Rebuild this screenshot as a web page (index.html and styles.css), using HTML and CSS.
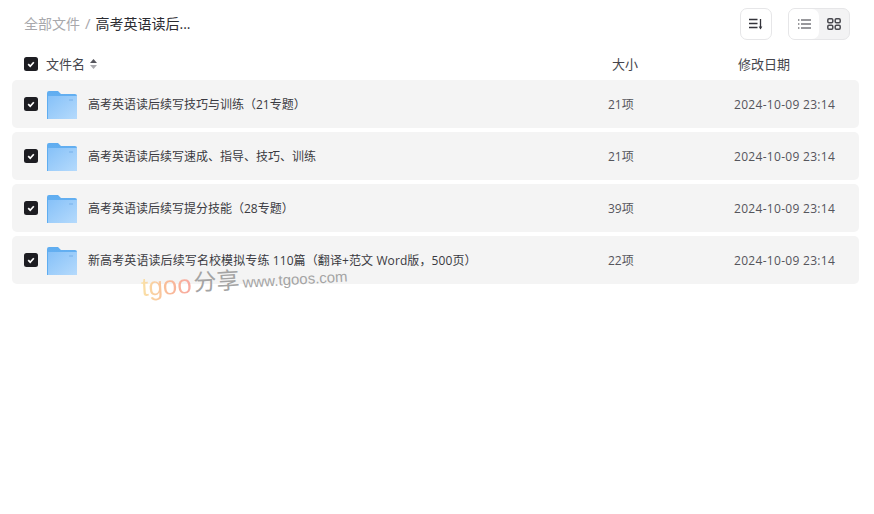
FILE: index.html

```html
<!DOCTYPE html>
<html lang="zh-CN">
<head>
    <meta charset="UTF-8">
    <title>全部文件</title>
    <link rel="stylesheet" href="styles.css">
</head>
<body>
    <svg class="defs" width="0" height="0">
        <defs>
            <linearGradient id="folder-back" x1="0" y1="0" x2="0" y2="1">
                <stop offset="0" stop-color="#5fadf0"/>
                <stop offset="1" stop-color="#78baf5"/>
            </linearGradient>
            <linearGradient id="folder-front" x1="0" y1="0" x2="1" y2="1">
                <stop offset="0" stop-color="#86c1f8"/>
                <stop offset="1" stop-color="#b5dafc"/>
            </linearGradient>
            <symbol id="folder" viewBox="0 0 30 28">
                <path d="M0 2a2 2 0 0 1 2-2h9l3 3h14a2 2 0 0 1 2 2v21H0z" fill="url(#folder-back)"/>
                <path d="M1 5h29v23H1z" fill="url(#folder-front)"/>
                <path d="M0 3h1v25H0z" fill="#5fadf0"/>
                <path d="M22 8h4v2h-4z" fill="#7fb6ec" opacity="0.6"/>
            </symbol>
            <symbol id="check" viewBox="0 0 14 14">
                <rect width="14" height="14" rx="2.5" fill="#1d1d22"/>
                <path d="M4.2 7.2l2 2 3.6-4" fill="none" stroke="#fff" stroke-width="1.7"/>
            </symbol>
        </defs>
    </svg>

    <header class="topbar">
        <nav class="crumbs">
            <span class="crumb-root">全部文件</span>
            <span class="crumb-sep">/</span>
            <span class="crumb-current">高考英语读后...</span>
        </nav>
        <div class="tools">
            <button class="tool-btn">
                <svg width="14" height="12" viewBox="0 0 14 12"><path d="M0 1.5h8.500M0 5.500h8.500M0 9.500h8.500M11.500 1v9.500" fill="none" stroke="#33333a" stroke-width="1.300"/><path d="M9.700 8.600h3.600L11.500 11.500z" fill="#33333a"/></svg>
            </button>
            <div class="view-switch">
                <button class="view-btn active">
                    <svg width="13" height="10" viewBox="0 0 13 10"><path d="M3 1h10M3 5h10M3 9h10" fill="none" stroke="#33333a" stroke-width="1.100"/><path d="M0 .4h1.400v1.200H0zM0 4.400h1.400v1.200H0zM0 8.400h1.400v1.200H0z" fill="#33333a"/></svg>
                </button>
                <button class="view-btn">
                    <svg width="14" height="12" viewBox="0 0 14 12"><g fill="none" stroke="#4a4a50" stroke-width="1.500"><rect x=".8" y=".8" width="5" height="4" rx="1.200"/><rect x="8.200" y=".8" width="5" height="4" rx="1.200"/><rect x=".8" y="7.200" width="5" height="4" rx="1.200"/><rect x="8.200" y="7.200" width="5" height="4" rx="1.200"/></g></svg>
                </button>
            </div>
        </div>
    </header>

    <div class="list-head">
        <div class="name-cell">
            <svg class="check"><use href="#check"/></svg>
            <span>文件名</span>
            <svg class="sort" width="7" height="10" viewBox="0 0 7 10"><path d="M3.500 0L7 4H0z" fill="#55555c"/><path d="M3.500 10L0 6h7z" fill="#aaaaaf"/></svg>
        </div>
        <div class="head-col">大小</div>
        <div class="head-col">修改日期</div>
    </div>

    <ul class="file-list">
        <li class="file-row">
            <div class="name-cell">
                <svg class="check"><use href="#check"/></svg>
                <svg class="folder"><use href="#folder"/></svg>
                <span class="file-name">高考英语读后续写技巧与训练（21专题）</span>
            </div>
            <div>21项</div>
            <div class="date-cell">2024-10-09 23:14</div>
        </li>
        <li class="file-row">
            <div class="name-cell">
                <svg class="check"><use href="#check"/></svg>
                <svg class="folder"><use href="#folder"/></svg>
                <span class="file-name">高考英语读后续写速成、指导、技巧、训练</span>
            </div>
            <div>21项</div>
            <div class="date-cell">2024-10-09 23:14</div>
        </li>
        <li class="file-row">
            <div class="name-cell">
                <svg class="check"><use href="#check"/></svg>
                <svg class="folder"><use href="#folder"/></svg>
                <span class="file-name">高考英语读后续写提分技能（28专题）</span>
            </div>
            <div>39项</div>
            <div class="date-cell">2024-10-09 23:14</div>
        </li>
        <li class="file-row">
            <div class="name-cell">
                <svg class="check"><use href="#check"/></svg>
                <svg class="folder"><use href="#folder"/></svg>
                <span class="file-name long-name">新高考英语读后续写名校模拟专练 110篇（翻译+范文 Word版，500页）</span>
            </div>
            <div>22项</div>
            <div class="date-cell">2024-10-09 23:14</div>
        </li>
    </ul>

    <div class="watermark">
        <span class="wm-logo">tgoo</span><span class="wm-cn">分享</span><span class="wm-url">www.tgoos.com</span>
    </div>
</body>
</html>
```

FILE: styles.css

```css
* {
    box-sizing: border-box;
}
body {
    margin: 0;
    min-height: 100vh;
    background: #fff;
    color: #33333a;
    font-family: "Open Sans", "Noto Sans CJK SC", sans-serif;
    font-size: 12px;
    position: relative;
}
.defs {
    display: block;
    height: 0;
}
.topbar {
    height: 48px;
    padding: 8px 24px 0 24px;
    display: flex;
    justify-content: space-between;
    align-items: flex-start;
}
.crumbs {
    height: 30px;
    display: flex;
    align-items: center;
    gap: 5px;
    font-size: 14px;
}
.crumb-root {
    color: #a8a8ac;
}
.crumb-sep {
    color: #a8a8ac;
    font-size: 15px;
}
.crumb-current {
    color: #2b2b31;
}
.tools {
    display: flex;
    gap: 16px;
}
.tool-btn {
    width: 32px;
    height: 32px;
    padding: 0;
    background: #fff;
    border: 1px solid #e6e6e8;
    border-radius: 7px;
    display: flex;
    align-items: center;
    justify-content: center;
}
.view-switch {
    width: 62px;
    height: 32px;
    background: #f3f3f4;
    border: 1px solid #e6e6e8;
    border-radius: 7px;
    display: flex;
    overflow: hidden;
}
.view-btn {
    flex: 1;
    padding: 0;
    background: none;
    border: none;
    display: flex;
    align-items: center;
    justify-content: center;
}
.view-btn.active {
    background: #fff;
    border-radius: 0 7px 7px 0;
}
.list-head {
    height: 32px;
    margin: 0 15px 0 12px;
    padding: 0 12px 2px;
    display: grid;
    grid-template-columns: 1fr 126px 113px;
    align-items: center;
    font-size: 13px;
    color: #45454c;
}
.head-col {
    padding-left: 4px;
}
.name-cell {
    display: flex;
    align-items: center;
}
.check {
    width: 14px;
    height: 14px;
    flex: none;
}
.list-head .check {
    margin: 2px 8px 0 0;
}
.sort {
    margin: 2px 0 0 5px;
}
.folder {
    width: 30px;
    height: 28px;
    flex: none;
    margin: 1px 11px 0 9px;
}
.file-list {
    list-style: none;
    margin: 0 15px 0 12px;
    padding: 0;
    display: flex;
    flex-direction: column;
    gap: 4px;
}
.file-row {
    height: 48px;
    padding: 0 12px;
    background: #f4f4f4;
    border-radius: 5px;
    display: grid;
    grid-template-columns: 1fr 126px 113px;
    align-items: center;
    color: #55555c;
}
.file-name {
    color: #3a3a41;
}
.long-name {
    letter-spacing: 0.1px;
}
.date-cell {
    letter-spacing: 0.3px;
}
.watermark {
    position: absolute;
    left: 142px;
    top: 267px;
    display: flex;
    align-items: baseline;
    white-space: nowrap;
    font-family: "Liberation Sans", "Noto Sans CJK SC", sans-serif;
    transform: rotate(-3.5deg);
    transform-origin: left bottom;
}
.wm-logo {
    font-size: 26px;
    background: linear-gradient(to right, #fae2a8, #f9bc98, #f8a8a0);
    -webkit-background-clip: text;
    background-clip: text;
    color: transparent;
    transform: translateY(2px);
}
.wm-cn {
    font-size: 23px;
    color: #a4a4a4;
    margin: 0 3px 0 2px;
}
.wm-url {
    font-size: 15px;
    color: #a4a4a4;
}
```
